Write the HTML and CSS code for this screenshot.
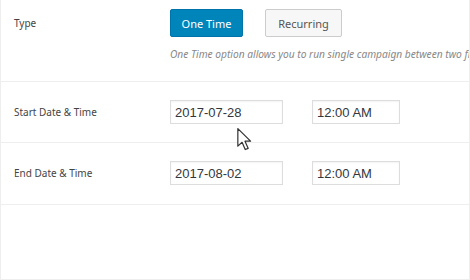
FILE: index.html
```html
<!DOCTYPE html>
<html lang="en">
<head>
  <meta charset="UTF-8">
  <title>Campaign Schedule</title>
  <link rel="stylesheet" href="styles.css">
</head>
<body>
  <div class="panel">
    <div class="row row-type">
      <div class="label">Type</div>
      <div class="field">
        <div class="toggle">
          <button class="btn btn-primary">One Time</button>
          <button class="btn">Recurring</button>
        </div>
        <p class="hint">One Time option allows you to run single campaign between two fixed dates.</p>
      </div>
    </div>
    <div class="row">
      <div class="label label-input">Start Date &amp; Time</div>
      <div class="field inputs">
        <input type="text" class="input input-date" value="2017-07-28">
        <input type="text" class="input input-time" value="12:00 AM">
        <svg class="cursor" width="17" height="23" viewBox="0 0 12 19">
          <path d="M0.5 0.5 L0.5 15 L4 11.8 L6.6 17.8 L9 16.8 L6.4 10.9 L11 10.9 Z" fill="#fff" stroke="#333" stroke-width="1" stroke-linejoin="round"/>
        </svg>
      </div>
    </div>
    <div class="row row-last">
      <div class="label label-input">End Date &amp; Time</div>
      <div class="field inputs">
        <input type="text" class="input input-date" value="2017-08-02">
        <input type="text" class="input input-time" value="12:00 AM">
      </div>
    </div>
  </div>
</body>
</html>
```

FILE: styles.css
```css
body {
  margin: 0;
  font-family: "Noto Sans", "Open Sans", sans-serif;
  background: #ffffff;
  color: #444;
}

.panel {
  box-sizing: border-box;
  width: 470px;
  height: 280px;
  border: 1px solid #eeeeee;
  border-top: none;
  overflow: hidden;
}

.row {
  display: grid;
  grid-template-columns: 156px 1fr;
  padding: 18px 0 18px 13px;
  border-bottom: 1px solid #eeeeee;
}

.row-type {
  padding-top: 9px;
  padding-bottom: 19px;
}

.row-last {
  padding-bottom: 19px;
}

.label {
  font-size: 10px;
  line-height: 28px;
  color: #444;
}

.label-input {
  line-height: 24px;
}

.field {
  position: relative;
  min-width: 0;
}

.toggle {
  display: flex;
  gap: 22px;
}

.btn {
  width: 77px;
  height: 28px;
  padding: 0;
  font-family: inherit;
  font-size: 11px;
  white-space: nowrap;
  color: #555;
  background: #f7f7f7;
  border: 1px solid #cccccc;
  border-radius: 2px;
}

.btn-primary {
  width: 73px;
  color: #ffffff;
  background: #0085ba;
  border-color: #0073aa;
}

.hint {
  margin: 9px 0 0;
  font-size: 10.2px;
  line-height: 16px;
  font-style: italic;
  color: #888;
  white-space: nowrap;
}

.inputs {
  display: flex;
  gap: 29px;
}

.input {
  box-sizing: border-box;
  height: 24px;
  padding: 0 4px;
  font-family: "Liberation Sans", Arial, sans-serif;
  font-size: 13px;
  color: #32373c;
  border: 1px solid #dddddd;
  box-shadow: inset 0 1px 2px rgba(0, 0, 0, 0.05);
  outline: none;
}

.input-date {
  width: 113px;
}

.input-time {
  width: 88px;
}

.cursor {
  position: absolute;
  left: 66px;
  top: 28px;
}
```
